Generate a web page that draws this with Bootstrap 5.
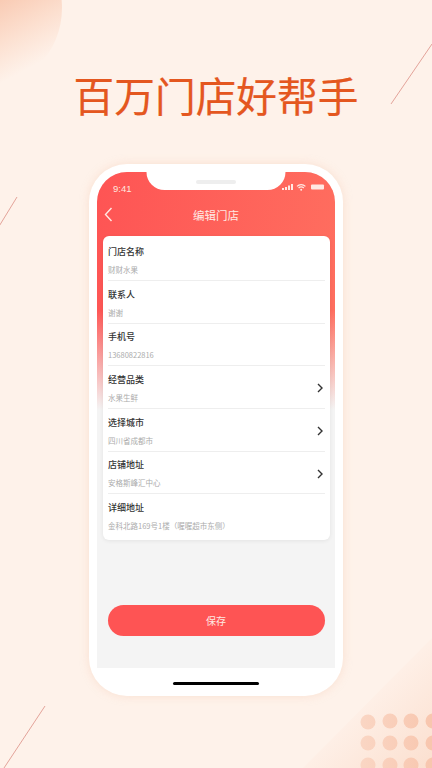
<!DOCTYPE html>
<html lang="zh">
<head>
<meta charset="utf-8">
<title>百万门店好帮手</title>
<link href="https://cdn.jsdelivr.net/npm/bootstrap@5.3.0/dist/css/bootstrap.min.css" rel="stylesheet">
<style>
html,body{margin:0;height:768px;width:432px;overflow:hidden}
body{background:#fef2ea;font-family:"Liberation Sans","Noto Sans CJK SC",sans-serif;position:relative}
.decor{position:absolute;left:0;top:0;width:432px;height:768px;pointer-events:none}
.stage{position:relative;height:768px;padding-top:72px}
.promo-title{font-family:"Noto Sans CJK SC",sans-serif;font-size:40.7px;line-height:46px;font-weight:400;color:#e4571f;text-align:center;margin:0 0 46px;-webkit-text-stroke:.2px #e4571f}
.phone{width:254px;height:532px;margin-left:89px;background:#fff;border-radius:38px;padding:8px 8px 0;box-shadow:0 0 10px rgba(240,190,160,.35);position:relative}
.screen{height:496px;background:#f4f4f4;border-radius:30px 30px 0 0;overflow:hidden;position:relative}
.hero{height:238px;background:linear-gradient(180deg,rgba(255,255,255,0) 0,rgba(255,255,255,0) 58%,#f4f4f4 100%),linear-gradient(100deg,#fe5454 0,#ff7060 100%);margin-bottom:-174px}
.notch{position:absolute;left:50%;top:0;transform:translateX(-50%);width:139px;height:18px;background:#fff;border-radius:0 0 22px 22px;z-index:2}
.speaker{position:absolute;left:50%;top:8px;transform:translateX(-50%);width:40px;height:4px;border-radius:2px;background:#eeeeee;z-index:3}
.status-row{height:29px;padding:10px 10px 0 16px;color:#ffe6df;font-size:9.5px;line-height:13px}
.status-ico{margin-top:1px}
.nav-row{height:28px;color:#ffe9e3;position:relative}
.nav-title{font-size:11.5px;line-height:14px;font-family:"Noto Sans CJK SC",sans-serif}
.back-ico{position:absolute;left:7px;top:6px}
.form-card{margin:0 5px 0 6px;background:#fff;border-radius:6px;box-shadow:0 1px 4px rgba(0,0,0,.07);padding:2.3px 5px 0;height:304px;position:relative}
.form-row{height:42.7px;border-bottom:1px solid #eeeeee;padding:6.7px 0 0 0;position:relative}
.form-row:last-child{border-bottom:0}
.row-label{font-family:"Noto Sans CJK SC",sans-serif;font-size:9px;line-height:13px;color:#333;font-weight:500}
.row-value{font-family:"Noto Sans CJK SC",sans-serif;font-size:7.5px;line-height:11px;color:#ababab;margin-top:6px}
.row-go{position:absolute;right:2px;top:17px}
.save-btn{display:block;width:217px;height:31px;margin:65px 0 0 10.5px;border:0;border-radius:16px;background:#fe5454;color:#ffe9e3;font-family:"Noto Sans CJK SC",sans-serif;font-size:10px;line-height:31px;padding:0}
.home-bar{position:absolute;left:84px;top:518px;width:86px;height:3px;border-radius:2px;background:#000}
</style>
</head>
<body>
<svg class="decor" viewBox="0 0 432 768" xmlns="http://www.w3.org/2000/svg">
<defs>
<linearGradient id="blob" gradientUnits="userSpaceOnUse" x1="0" y1="0" x2="35" y2="65"><stop offset="0" stop-color="#f9cbb4"/><stop offset=".5" stop-color="#fcdfcf"/><stop offset="1" stop-color="#fef2ea"/></linearGradient>
<linearGradient id="wedge" gradientUnits="userSpaceOnUse" x1="368" y1="703" x2="432" y2="768"><stop offset="0" stop-color="#feefe6"/><stop offset="1" stop-color="#fbdfcf"/></linearGradient>
<linearGradient id="dots" gradientUnits="userSpaceOnUse" x1="360" y1="0" x2="432" y2="0"><stop offset="0" stop-color="#fad6c4"/><stop offset="1" stop-color="#f8c6ae"/></linearGradient>
</defs>
<circle cx="-20" cy="8" r="82" fill="url(#blob)"/>
<polygon points="432,638 432,768 303,768" fill="url(#wedge)"/>
<g fill="url(#dots)">
<circle cx="368" cy="722" r="7.5"/><circle cx="390" cy="721" r="7.5"/><circle cx="411" cy="721" r="7.5"/><circle cx="433" cy="721" r="7.5"/>
<circle cx="368" cy="743" r="7.5"/><circle cx="390" cy="743" r="7.5"/><circle cx="411" cy="743" r="7.5"/><circle cx="433" cy="743" r="7.5"/>
<circle cx="368" cy="765" r="7.5"/><circle cx="390" cy="765" r="7.5"/><circle cx="411" cy="765" r="7.5"/><circle cx="433" cy="765" r="7.5"/>
</g>
<g stroke="#dc8f85" stroke-width=".8" fill="none">
<line x1="432" y1="44" x2="391" y2="104"/>
<line x1="17" y1="197" x2="-2" y2="228"/>
<line x1="45" y1="706" x2="4" y2="768"/>
</g>
</svg>
<div class="stage">
<h1 class="promo-title">百万门店好帮手</h1>
<div class="phone">
<div class="screen">
<div class="hero"></div>
<div class="notch"></div><div class="speaker"></div>
<div class="position-absolute top-0 start-0 w-100" style="z-index:1">
<div class="status-row d-flex justify-content-between">
<span>9:41</span>
<svg class="status-ico" width="43" height="9" viewBox="0 0 43 9"><g fill="#ffe9e3"><rect x="0" y="5" width="2" height="2"/><rect x="3" y="4" width="2" height="3"/><rect x="6" y="2.5" width="2" height="4.5"/><rect x="9" y="1" width="2" height="6"/><rect x="29" y="1.5" width="13" height="5" rx="1"/></g><path d="M15 3.4a6 6 0 0 1 8.4 0M16.6 5a3.6 3.6 0 0 1 5.2 0" stroke="#ffe9e3" stroke-width="1.2" fill="none"/><circle cx="19.2" cy="6.7" r="1" fill="#ffe9e3"/></svg>
</div>
<div class="nav-row d-flex justify-content-center align-items-center">
<svg class="back-ico" width="9" height="15" viewBox="0 0 9 15"><path d="M7.5 1 1.5 7.5l6 6.5" stroke="#ffe9e3" stroke-width="1.4" fill="none"/></svg>
<span class="nav-title">编辑门店</span>
</div>
</div>
<div class="form-card">
<div class="form-row"><div class="row-label">门店名称</div><div class="row-value">财财水果</div></div>
<div class="form-row"><div class="row-label">联系人</div><div class="row-value">谢谢</div></div>
<div class="form-row"><div class="row-label">手机号</div><div class="row-value">13680822816</div></div>
<div class="form-row"><div class="row-label">经营品类</div><div class="row-value">水果生鲜</div><svg class="row-go" width="6" height="10" viewBox="0 0 6 10"><path d="M1 1l4 4-4 4" stroke="#333" stroke-width="1.4" fill="none"/></svg></div>
<div class="form-row"><div class="row-label">选择城市</div><div class="row-value">四川省成都市</div><svg class="row-go" width="6" height="10" viewBox="0 0 6 10"><path d="M1 1l4 4-4 4" stroke="#333" stroke-width="1.4" fill="none"/></svg></div>
<div class="form-row"><div class="row-label">店铺地址</div><div class="row-value">安格斯峰汇中心</div><svg class="row-go" width="6" height="10" viewBox="0 0 6 10"><path d="M1 1l4 4-4 4" stroke="#333" stroke-width="1.4" fill="none"/></svg></div>
<div class="form-row"><div class="row-label">详细地址</div><div class="row-value">金科北路169号1楼（喔喔超市东侧）</div></div>
</div>
<button class="save-btn btn" type="button">保存</button>
</div>
<div class="home-bar"></div>
</div>
</div>
<script src="https://cdn.jsdelivr.net/npm/bootstrap@5.3.0/dist/js/bootstrap.bundle.min.js"></script>
</body>
</html>
